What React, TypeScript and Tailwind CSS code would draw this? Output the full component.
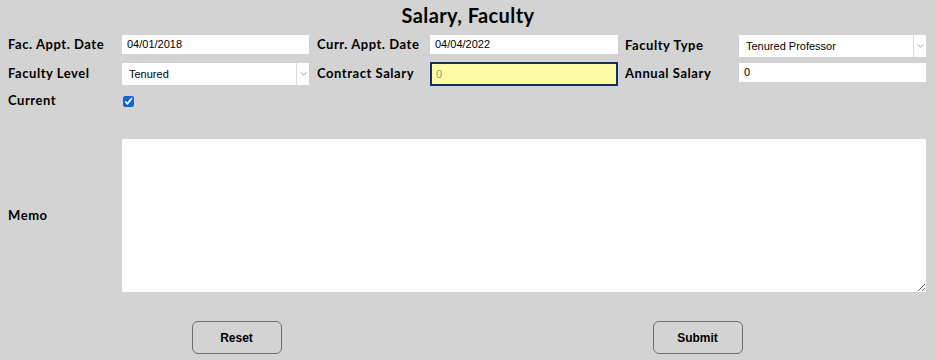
import React from "react";

const labelFont = { fontFamily: "Lato, 'Noto Sans', sans-serif" };
const fieldFont = { fontFamily: "'Liberation Sans', Arial, sans-serif" };

const Label = ({ text, h }: { text: string; h: string }) => (
  <div
    className={`flex items-center text-[13px] font-bold tracking-[0.55px] text-black ${h}`}
    style={labelFont}
  >
    {text}
  </div>
);

const TextBox = ({ value }: { value: string }) => (
  <div
    className="flex h-[19px] items-center bg-white pl-[5px] text-[11px] text-black"
    style={fieldFont}
  >
    {value}
  </div>
);

const Select = ({ value }: { value: string }) => (
  <div className="flex h-[22px] bg-white" style={fieldFont}>
    <div className="flex flex-1 items-center pl-[7px] text-[11px] text-black">
      {value}
    </div>
    <div className="flex w-[13px] items-center justify-center border-l border-[#dcdcdc]">
      <svg width="7" height="4" viewBox="0 0 7 4">
        <path d="M0.5 0.5 L3.5 3 L6.5 0.5" fill="none" stroke="#a0a0a0" strokeWidth="1" />
      </svg>
    </div>
  </div>
);

export default function App() {
  return (
    <div className="h-[360px] w-[936px] bg-[#d3d3d3] px-2">
      <h1
        className="pt-[3px] text-center text-[20px] font-bold leading-[24px] tracking-[0.4px] text-black"
        style={labelFont}
      >
        Salary, Faculty
      </h1>

      <div className="mt-[8px] grid grid-cols-[114px_187px_121px_188px_121px_187px] items-start">
        <Label text="Fac. Appt. Date" h="h-[19px]" />
        <TextBox value="04/01/2018" />
        <div className="pl-2">
          <Label text="Curr. Appt. Date" h="h-[19px]" />
        </div>
        <TextBox value="04/04/2022" />
        <div className="pl-[7px]">
          <Label text="Faculty Type" h="h-[22px]" />
        </div>
        <Select value="Tenured Professor" />
      </div>

      <div className="mt-[6px] grid grid-cols-[114px_187px_121px_188px_121px_187px] items-start">
        <Label text="Faculty Level" h="h-[22px]" />
        <Select value="Tenured" />
        <div className="pl-2">
          <Label text="Contract Salary" h="h-[22px]" />
        </div>
        <div
          className="-mt-px flex h-[24px] items-center border-2 border-[#162d63] bg-[#fbfca5] pl-[4px] text-[11px] text-[#9a9a70]"
          style={fieldFont}
        >
          0
        </div>
        <div className="pl-[7px]">
          <Label text="Annual Salary" h="h-[22px]" />
        </div>
        <TextBox value="0" />
      </div>

      <div className="mt-[8px] grid grid-cols-[114px_1fr] items-center">
        <Label text="Current" h="h-[14px]" />
        <div className="flex h-[14px] items-center pl-[1px]">
          <input
            type="checkbox"
            defaultChecked
            className="m-0 h-[11px] w-[11px] accent-[#1565d8]"
          />
        </div>
      </div>

      <div className="mt-[31px] grid grid-cols-[114px_804px] items-center">
        <Label text="Memo" h="h-[20px]" />
        <textarea className="block h-[153px] w-full border-0 bg-white outline-none" />
      </div>

      <div className="-ml-[2px] mt-[29px] grid grid-cols-2">
        <div className="flex justify-center">
          <button
            className="h-[33px] w-[90px] rounded-[6px] border border-[#6e6e6e] text-[12px] font-bold text-black"
            style={fieldFont}
          >
            Reset
          </button>
        </div>
        <div className="flex justify-center">
          <button
            className="h-[33px] w-[90px] rounded-[6px] border border-[#6e6e6e] text-[12px] font-bold text-black"
            style={fieldFont}
          >
            Submit
          </button>
        </div>
      </div>
    </div>
  );
}
